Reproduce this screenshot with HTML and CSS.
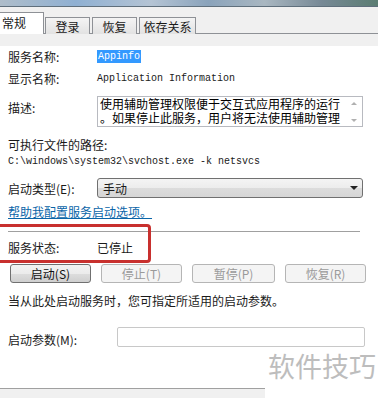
FILE: index.html
```html
<!DOCTYPE html>
<html lang="zh-CN">

<head>
  <meta charset="UTF-8" />
  <title>Appinfo 的属性</title>
  <link rel="stylesheet" href="styles.css">
</head>

<body>

  <div class="titlebar"></div>

  <div class="tabs">
    <div class="tab active">常规</div>
    <div class="tab">登录</div>
    <div class="tab">恢复</div>
    <div class="tab">依存关系</div>
  </div>

  <div class="panel">
    <div class="row first">
      <span class="label">服务名称:</span>
      <span class="mono selected">Appinfo</span>
    </div>

    <div class="row">
      <span class="label">显示名称:</span>
      <span class="mono">Application Information</span>
    </div>

    <div class="row desc-row">
      <span class="label">描述:</span>
      <div class="desc">
        <div class="desc-text">使用辅助管理权限便于交互式应用程序的运行。如果停止此服务，用户将无法使用辅助管理</div>
        <div class="scroll">
          <span class="arrow up"></span>
          <span class="arrow down"></span>
        </div>
      </div>
    </div>

    <div class="path-label">可执行文件的路径:</div>
    <div class="mono path">C:\windows\system32\svchost.exe -k netsvcs</div>

    <div class="row select-row">
      <span class="label">启动类型(E):</span>
      <div class="select">
        <span>手动</span>
        <span class="caret"></span>
      </div>
    </div>

    <a class="help-link" href="#">帮助我配置服务启动选项。</a>

    <div class="sep"></div>

    <div class="row status-row">
      <span class="label">服务状态:</span>
      <span>已停止</span>
    </div>

    <div class="btn-row">
      <button class="btn">启动(S)</button>
      <button class="btn disabled">停止(T)</button>
      <button class="btn disabled wide">暂停(P)</button>
      <button class="btn disabled">恢复(R)</button>
    </div>

    <p class="hint">当从此处启动服务时，您可指定所适用的启动参数。</p>

    <div class="row param-row">
      <span class="label">启动参数(M):</span>
      <div class="input"></div>
    </div>
  </div>

  <div class="footer">
    <button class="btn default">确定</button>
    <button class="btn">取消</button>
  </div>

  <!-- annotation + watermark on top -->
  <div class="mark"></div>
  <div class="watermark">软件技巧</div>

</body>

</html>
```

FILE: styles.css
```css
* {
  margin: 0;
  padding: 0;
  box-sizing: border-box;
}

body {
  width: 378px;
  height: 398px;
  overflow: hidden;
  position: relative;
  background: #f0f0f0;
  color: #1a1a1a;
  font-family: 'Noto Sans CJK SC', 'Noto Sans', sans-serif;
  font-size: 12px;
}

.titlebar {
  height: 7px;
  background: linear-gradient(90deg, #aebdca 0%, #8fb0d2 20%, #b4c4d4 40%, #8aa3bb 55%, #a9b7c1 70%, #778996 85%, #5b7d72 100%);
  border-bottom: 1px solid #5f6f7c;
}

.tabs {
  height: 27px;
  display: flex;
  align-items: flex-end;
  gap: 2px;
  border-bottom: 1px solid #8e9196;
}

.tab {
  height: 17px;
  width: 45px;
  margin-bottom: -1px;
  padding-top: 1px;
  text-align: center;
  line-height: 15px;
  background: linear-gradient(#f4f4f4, #e2e2e2);
  border: 1px solid #8e9196;
  border-bottom: none;
  font-size: 12px;
}

.tab:nth-child(4) {
  width: 57px;
}

.tab.active {
  height: 22px;
  width: 44px;
  margin-right: -1px;
  padding-top: 2px;
  text-align: left;
  padding-left: 2px;
  background: #fff;
  border-left: none;
}

.panel {
  height: 343px;
  background: #fff;
  padding-left: 8px;
  border-bottom: 1px solid #a0a0a0;
}

.row {
  display: flex;
  align-items: center;
  height: 20px;
  margin-top: 2px;
}

.row.first {
  margin-top: 12px;
}

.label {
  width: 89px;
  flex-shrink: 0;
}

.mono {
  font-family: 'Liberation Mono', monospace;
  font-size: 10px;
}

.selected {
  background: #3399ff;
  color: #fff;
  padding: 0 1px;
  line-height: 13px;
}

.desc-row {
  height: 31px;
  margin-top: 8px;
  align-items: flex-start;
}

.desc-row .label {
  padding-top: 3px;
}

.desc {
  width: 266px;
  height: 31px;
  display: flex;
  border: 1px solid #b8bac0;
}

.desc-text {
  flex: 1;
  padding: 0 2px;
  font-size: 12px;
  line-height: 14px;
  color: #000;
  overflow: hidden;
  word-break: break-all;
  line-break: anywhere;
}

.scroll {
  width: 17px;
  display: flex;
  flex-direction: column;
  justify-content: space-between;
  align-items: center;
  padding: 5px 0 4px;
}

.arrow {
  width: 0;
  height: 0;
  border-left: 3px solid transparent;
  border-right: 3px solid transparent;
}

.arrow.up {
  border-bottom: 3px solid #b0b0b0;
}

.arrow.down {
  border-top: 3px solid #b0b0b0;
}

.path-label {
  margin-top: 10px;
  height: 16px;
  line-height: 16px;
}

.path {
  margin-top: 2px;
  height: 14px;
  line-height: 14px;
}

.select-row {
  margin-top: 9px;
}

.select {
  width: 266px;
  height: 20px;
  display: flex;
  align-items: center;
  justify-content: space-between;
  padding: 0 4px 0 5px;
  border: 1px solid #707070;
  border-radius: 3px;
  background: linear-gradient(#f4f4f4 0%, #ececec 50%, #dcdcdc 51%, #d6d6d6 100%);
}

.caret {
  width: 0;
  height: 0;
  border-left: 4px solid transparent;
  border-right: 4px solid transparent;
  border-top: 4px solid #222;
}

.help-link {
  display: block;
  margin-top: 6px;
  height: 16px;
  line-height: 16px;
  color: #0a65a8;
  text-decoration: underline;
  width: max-content;
}

.sep {
  margin-top: 11px;
  width: 352px;
  height: 1px;
  background: #a0a0a0;
}

.status-row {
  margin-top: 7px;
  height: 17px;
}

.btn-row {
  display: flex;
  gap: 10px;
  margin-top: 8px;
  padding-left: 2px;
}

.btn {
  width: 81px;
  height: 19px;
  font-family: inherit;
  font-size: 12px;
  color: #111;
  border: 1px solid #707070;
  border-radius: 3px;
  background: linear-gradient(#f2f2f2 0%, #ebebeb 50%, #dddddd 51%, #cfcfcf 100%);
}

.btn.wide {
  width: 83px;
}

.btn.disabled {
  color: #9a9a9a;
  border-color: #b5b5b5;
  background: #f4f4f4;
}

.hint {
  margin-top: 10px;
  height: 16px;
  line-height: 16px;
}

.param-row {
  margin-top: 20px;
}

.param-row .label {
  width: 109px;
}

.input {
  width: 248px;
  height: 20px;
  border: 1px solid #c8c8c8;
  border-radius: 2px;
  margin-top: -4px;
}

.footer {
  display: flex;
  gap: 12px;
  padding: 9px 0 0 150px;
}

.footer .btn {
  width: 71px;
  height: 22px;
  line-height: 18px;
}

.footer .btn.default {
  border-color: #3c7fb1;
  box-shadow: inset 0 0 0 1px #48d8fb;
}

.mark {
  position: absolute;
  left: -10px;
  top: 224px;
  width: 161px;
  height: 39px;
  border: 3px solid #c8302e;
  border-radius: 4px;
}

.watermark {
  position: absolute;
  left: 265px;
  top: 349px;
  width: 113px;
  height: 49px;
  padding-left: 3px;
  background: #fff;
  color: #bdbdbd;
  font-size: 27px;
  line-height: 33px;
}
```
